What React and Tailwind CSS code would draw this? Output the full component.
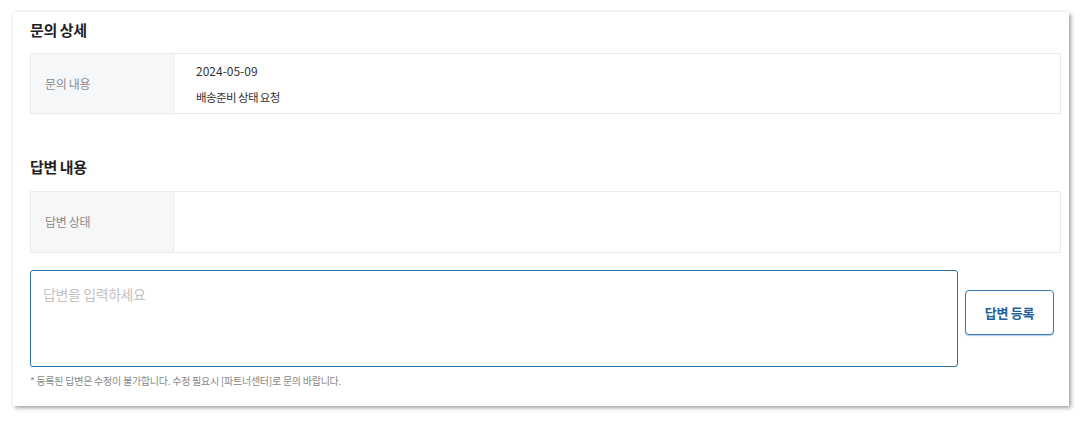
export default function App() {
  return (
    <div
      className="w-[1092px] h-[430px] bg-white pt-[12px] pl-[13px]"
      style={{ fontFamily: '"Noto Sans CJK KR", "Noto Sans", sans-serif' }}
    >
      <div className="w-[1056px] h-[394px] bg-white shadow-[2px_2px_4px_rgba(0,0,0,0.35),0_0_3px_rgba(0,0,0,0.08)] pl-[17px] pr-[8px] pt-[7px]">
        {/* 문의 상세 */}
        <h2 className="text-[15px] leading-[22px] font-bold text-[#222] tracking-[-0.4px]">문의 상세</h2>
        <div className="mt-[12px] flex h-[61px] border border-[#ebebeb]">
          <div className="w-[143px] shrink-0 bg-[#f6f7f9] border-r border-[#ebebeb] flex items-center pl-[14px] text-[12px] text-[#8a8a8a] tracking-[-0.3px]">
            문의 내용
          </div>
          <div className="flex-1 pl-[22px] pt-[8px] text-[12px] text-[#333]">
            <p className="leading-[18px]">2024-05-09</p>
            <p className="leading-[18px] mt-[8px] text-[11.5px] tracking-[-0.6px]">배송준비 상태 요청</p>
          </div>
        </div>

        {/* 답변 내용 */}
        <h2 className="mt-[42px] text-[15px] leading-[22px] font-bold text-[#222] tracking-[-0.4px]">답변 내용</h2>
        <div className="mt-[13px] flex h-[62px] border border-[#ebebeb]">
          <div className="w-[143px] shrink-0 bg-[#f6f7f9] border-r border-[#ebebeb] flex items-center pl-[14px] text-[12px] text-[#8a8a8a] tracking-[-0.3px]">
            답변 상태
          </div>
          <div className="flex-1" />
        </div>

        <div className="mt-[17px] flex gap-[7px]">
          <textarea
            className="w-[928px] h-[97px] resize-none border border-[#2a6eab] rounded-[3px] px-[12px] py-[13px] text-[14px] leading-[20px] text-[#333] placeholder-[#c2c2c2] tracking-[-0.4px] outline-none"
            placeholder="답변을 입력하세요"
          />
          <button className="mt-[20px] w-[89px] h-[45px] border border-[#3a78b0] rounded-[4px] bg-white text-[13px] font-bold text-[#1f5f99] tracking-[-0.3px] shadow-[0_1px_1px_rgba(42,110,171,0.35)]">
            답변 등록
          </button>
        </div>
        <p className="mt-[7px] text-[10px] leading-[14px] text-[#888] tracking-[-0.25px]">
          * 등록된 답변은 수정이 불가합니다. 수정 필요시 [파트너센터]로 문의 바랍니다.
        </p>
      </div>
    </div>
  );
}
